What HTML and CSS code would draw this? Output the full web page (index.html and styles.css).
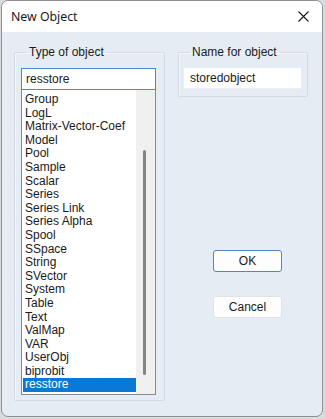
FILE: index.html
```html
<!DOCTYPE html>
<html lang="en">
<head>
    <meta charset="UTF-8">
    <meta name="viewport" content="width=device-width, initial-scale=1.0">
    <title>New Object</title>
    <link rel="stylesheet" href="styles.css">
</head>
<body>

    <div class="window">
        <div class="titlebar">
            <span class="title">New Object</span>
            <svg class="close" width="11" height="11" viewBox="0 0 11 11">
                <path d="M0.5 0.5 L10.5 10.5 M10.5 0.5 L0.5 10.5" stroke="#1a1a1a" stroke-width="1.1" fill="none"/>
            </svg>
        </div>

        <div class="content">
            <fieldset class="group group-type">
                <legend>Type of object</legend>
                <div class="combo-edit">resstore</div>
                <div class="listbox">
                    <ul class="items">
                        <li>Group</li>
                        <li>LogL</li>
                        <li>Matrix-Vector-Coef</li>
                        <li>Model</li>
                        <li>Pool</li>
                        <li>Sample</li>
                        <li>Scalar</li>
                        <li>Series</li>
                        <li>Series Link</li>
                        <li>Series Alpha</li>
                        <li>Spool</li>
                        <li>SSpace</li>
                        <li>String</li>
                        <li>SVector</li>
                        <li>System</li>
                        <li>Table</li>
                        <li>Text</li>
                        <li>ValMap</li>
                        <li>VAR</li>
                        <li>UserObj</li>
                        <li>biprobit</li>
                        <li class="selected">resstore</li>
                    </ul>
                    <div class="scrollbar"><div class="thumb"></div></div>
                </div>
            </fieldset>

            <div class="side">
                <fieldset class="group group-name">
                    <legend>Name for object</legend>
                    <div class="name-edit">storedobject</div>
                </fieldset>

                <div class="buttons">
                    <button class="btn btn-default">OK</button>
                    <button class="btn">Cancel</button>
                </div>
            </div>
        </div>
    </div>

</body>
</html>
```

FILE: styles.css
```css
* {
    box-sizing: border-box;
}
body {
    margin: 0;
    background-color: #d9dbde;
    font-family: "Liberation Sans", Arial, sans-serif;
    font-size: 12px;
    color: #1a1a1a;
}
.window {
    width: 322px;
    height: 417px;
    margin-left: 1px;
    border: 1px solid #8c8f94;
    border-radius: 7px;
    overflow: hidden;
    background-color: #e6ecf4;
    display: flex;
    flex-direction: column;
}
.titlebar {
    height: 31px;
    flex-shrink: 0;
    background-color: #fff;
    display: flex;
    align-items: center;
    justify-content: space-between;
    padding: 0 9px 0 9px;
}
.title {
    font-family: "Noto Sans", sans-serif;
    font-size: 12.3px;
}
.close {
    margin-right: 4px;
}
.content {
    flex: 1;
    display: flex;
    align-items: flex-start;
    padding: 13px 0 0 12px;
}
.group {
    margin: 0;
    padding: 0;
    border: 1px solid #d3dae3;
    box-shadow: inset 1px 1px 0 #f4f7fb;
    border-radius: 2px;
}
.group legend {
    padding: 0 2px;
    margin-left: 6px;
    line-height: 14px;
}
.group-type {
    width: 151px;
    height: 356px;
    padding: 9px 0 0 6px;
}
.combo-edit {
    width: 135px;
    height: 22px;
    border: 1px solid #4f86c9;
    background-color: #fff;
    line-height: 20px;
    padding-left: 4px;
}
.listbox {
    width: 135px;
    height: 305px;
    border: 1px solid #84888f;
    border-top: none;
    background-color: #fff;
    display: flex;
}
.items {
    list-style: none;
    margin: 0;
    padding: 3px 0 0 1px;
    width: 114px;
}
.items li {
    height: 13.6px;
    line-height: 13.6px;
    padding-left: 2px;
    white-space: nowrap;
}
.items li.selected {
    background-color: #0a78d7;
    color: #fff;
}
.scrollbar {
    flex: 1;
    background-color: #f0f0f0;
    position: relative;
}
.thumb {
    position: absolute;
    left: 7px;
    top: 60px;
    width: 3px;
    height: 225px;
    border-radius: 2px;
    background-color: #858585;
}
.side {
    margin-left: 13px;
    width: 130px;
}
.group-name {
    width: 130px;
    height: 52px;
    padding: 9px 0 0 5px;
}
.name-edit {
    width: 117px;
    height: 21px;
    background-color: #fff;
    border-bottom: 1px solid #eef1f5;
    line-height: 20px;
    padding-left: 6px;
}
.buttons {
    display: flex;
    flex-direction: column;
    align-items: flex-start;
    gap: 24px;
    margin-top: 153px;
    padding-left: 35px;
}
.btn {
    width: 69px;
    height: 22px;
    font-family: "Liberation Sans", Arial, sans-serif;
    font-size: 12px;
    color: #1a1a1a;
    background-color: #fdfdfd;
    border: 1px solid #e1e3e6;
    border-radius: 3px;
    padding: 0;
}
.btn-default {
    border-color: #4f86c9;
}
```
